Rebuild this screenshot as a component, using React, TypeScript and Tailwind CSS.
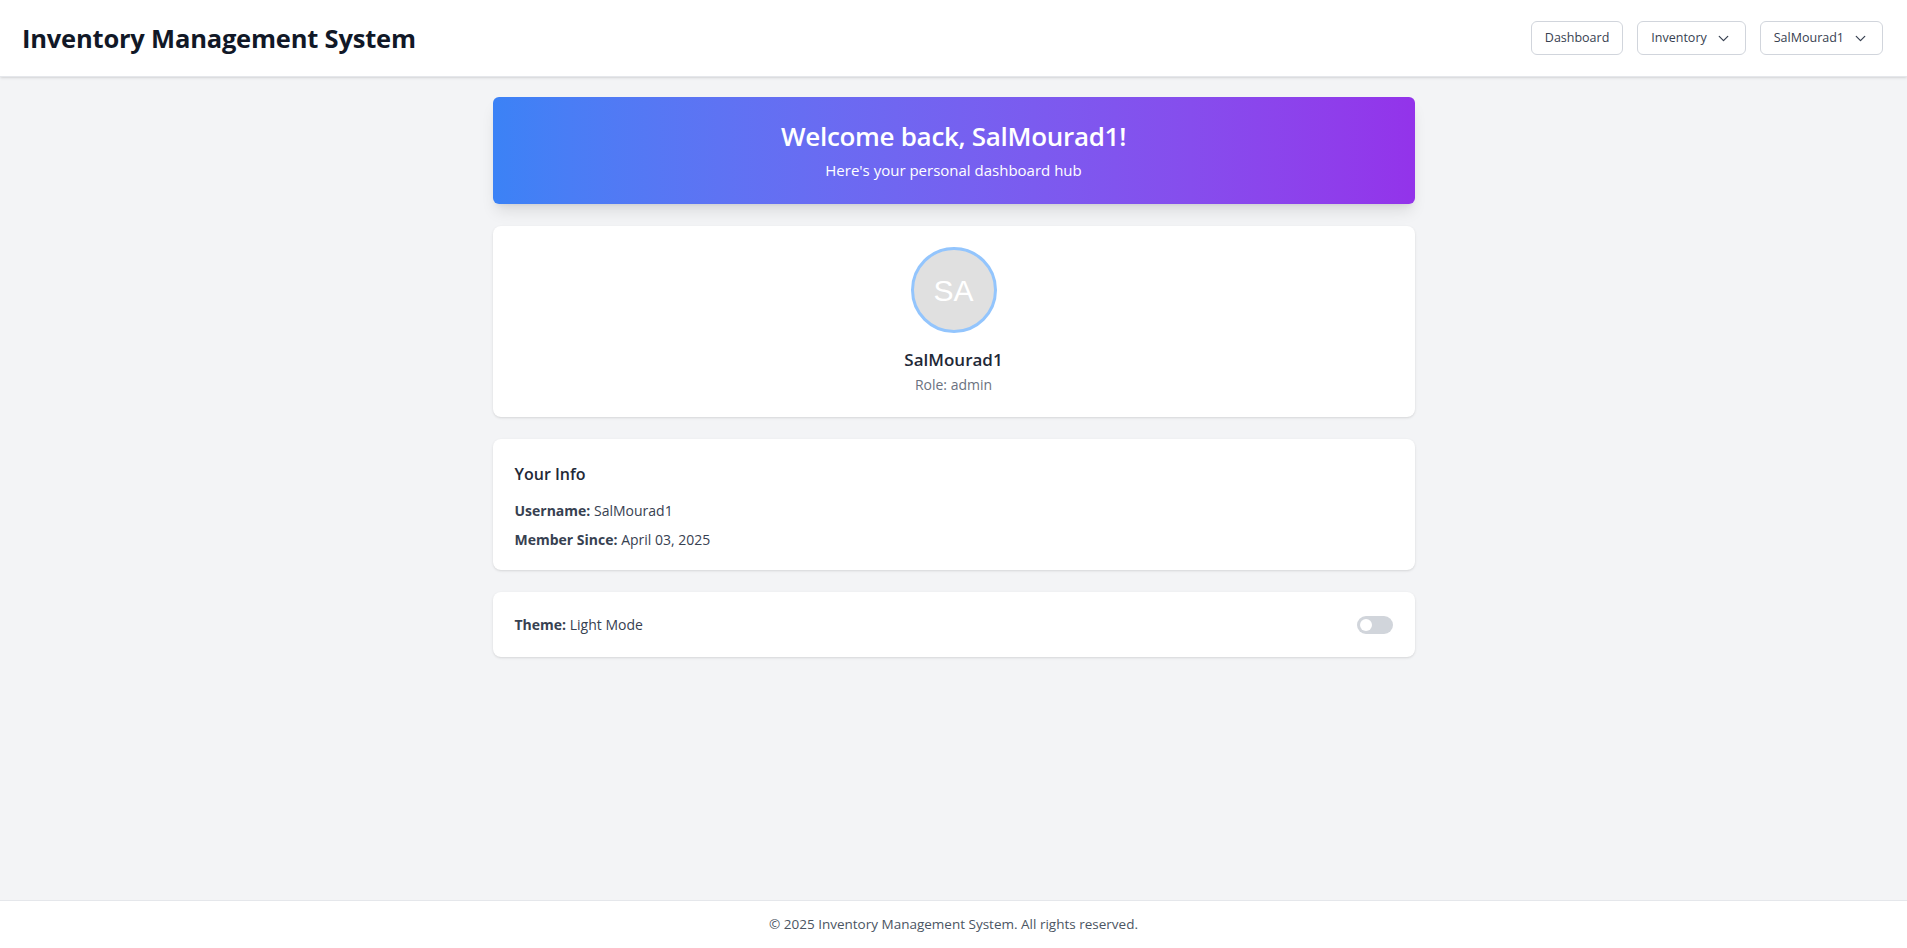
import { ChevronDown } from 'lucide-react';
import { useState } from 'react';

const Header = () => {
  return (
    <header className="h-[77px] bg-white border-b border-gray-200 shadow-sm flex items-center justify-between pl-[22px] pr-[24px]">
      <h1 className="text-[25.5px] font-bold text-[#111827] tracking-[-0.2px]">Inventory Management System</h1>
      <nav className="flex items-center gap-[14px]">
        <button className="h-[34px] px-[13px] border border-gray-300 rounded-md text-[12.5px] text-[#374151] bg-white">
          Dashboard
        </button>
        <button className="h-[34px] px-[13px] border border-gray-300 rounded-md text-[12.5px] text-[#374151] bg-white flex items-center gap-[8px]">
          Inventory
          <ChevronDown size={17} strokeWidth={1.75} />
        </button>
        <button className="h-[34px] px-[13px] border border-gray-300 rounded-md text-[12.5px] text-[#374151] bg-white flex items-center gap-[8px]">
          SalMourad1
          <ChevronDown size={17} strokeWidth={1.75} />
        </button>
      </nav>
    </header>
  );
};

const App = () => {
  const [dark, setDark] = useState(false);
  const user = { username: 'SalMourad1', role: 'admin', memberSince: 'April 03, 2025' };

  return (
    <div className="min-h-screen bg-gray-100 flex flex-col font-['Open_Sans',sans-serif]">
      <Header />

      <main className="flex-1">
        <div className="w-[922px] mx-auto pt-[20px] pb-10 flex flex-col gap-[22px]">
          {/* Welcome banner */}
          <section className="h-[107px] rounded-md shadow-lg bg-gradient-to-r from-[#3b82f6] to-[#9333ea] flex flex-col items-center justify-center text-white">
            <h2 className="text-[26px] font-semibold leading-tight tracking-[-0.3px]">Welcome back, {user.username}!</h2>
            <p className="text-[15px] mt-[7px]">Here's your personal dashboard hub</p>
          </section>

          {/* Profile */}
          <section className="h-[191px] bg-white rounded-lg shadow-sm flex flex-col items-center pt-[21px]">
            <div className="w-[86px] h-[86px] rounded-full border-[3px] border-[#93c5fd] bg-[#e0e0e0] flex items-center justify-center">
              <span className="text-white text-[30px] font-['Liberation_Sans',sans-serif]">SA</span>
            </div>
            <div className="mt-[14px] text-[17px] font-semibold text-[#1f2937]">{user.username}</div>
            <div className="text-[14px] text-[#6b7280] mt-[1px]">Role: {user.role}</div>
          </section>

          {/* Info */}
          <section className="h-[131px] bg-white rounded-lg shadow-sm px-[22px] pt-[23px]">
            <h3 className="text-[16px] font-semibold text-[#1f2937]">Your Info</h3>
            <div className="mt-[14px] text-[14px] text-[#374151] space-y-[8px]">
              <p><span className="font-bold">Username:</span> {user.username}</p>
              <p><span className="font-bold">Member Since:</span> {user.memberSince}</p>
            </div>
          </section>

          {/* Theme */}
          <section className="h-[65px] bg-white rounded-lg shadow-sm px-[22px] flex items-center justify-between">
            <p className="text-[14px] text-[#374151]"><span className="font-bold">Theme:</span> {dark ? 'Dark Mode' : 'Light Mode'}</p>
            <button
              onClick={() => setDark(!dark)}
              className="w-[36px] h-[18px] rounded-full bg-[#d1d5db] flex items-center px-[3px]"
            >
              <span className="w-[12px] h-[12px] rounded-full bg-white" />
            </button>
          </section>
        </div>
      </main>

      <footer className="h-[48px] bg-white border-t border-gray-200 flex items-center justify-center text-[13.5px] text-[#4b5563]">
        © 2025 Inventory Management System. All rights reserved.
      </footer>
    </div>
  );
};

export default App;
